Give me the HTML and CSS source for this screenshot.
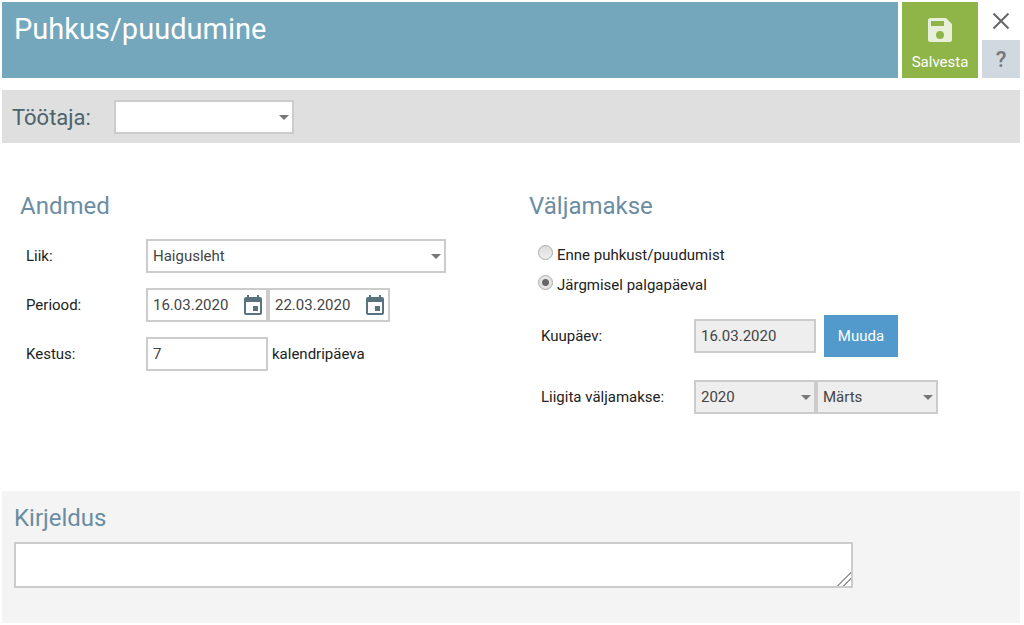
FILE: index.html
```html
<!DOCTYPE html>
<html lang="et">
<head>
<meta charset="utf-8">
<meta name="viewport" content="width=device-width, initial-scale=1">
<title>Puhkus/puudumine</title>
<link rel="stylesheet" href="styles.css">
</head>
<body>
<form class="page">
  <header class="header">
    <h1 class="title">Puhkus/puudumine</h1>
    <button type="button" class="save">
      <svg class="save-icon" viewBox="0 0 24 24" aria-hidden="true"><path fill-rule="evenodd" d="M2.500 0H18L24 6V21.500Q24 24 21.500 24H2.500Q0 24 0 21.500V2.500Q0 0 2.500 0ZM3 3V8H16V3ZM12 13A4 4 0 1 0 12 21A4 4 0 1 0 12 13Z"/></svg>
      <span>Salvesta</span>
    </button>
    <div class="tools">
      <button type="button" class="close" aria-label="Sulge">
        <svg class="close-icon" viewBox="0 0 18 18" aria-hidden="true"><path d="M1.500 1.500L16.500 16.500M16.500 1.500L1.500 16.500"/></svg>
      </button>
      <button type="button" class="help">?</button>
    </div>
  </header>

  <div class="employee">
    <label class="employee-label" for="employee">Töötaja:</label>
    <div class="select employee-select"><select id="employee" class="field"><option></option></select></div>
  </div>

  <main class="columns">
    <section class="column">
      <h2 class="heading">Andmed</h2>
      <div class="rows">
        <div class="row">
          <label for="type">Liik:</label>
          <div class="select type-select"><select id="type" class="field"><option>Haigusleht</option></select></div>
        </div>
        <div class="row">
          <label for="from">Periood:</label>
          <div class="pair">
            <div class="date">
              <input id="from" class="field" type="text" value="16.03.2020">
              <svg class="calendar" viewBox="0 0 18 20" aria-hidden="true"><path fill-rule="evenodd" d="M3 0H5V2H13V0H15V2H16Q18 2 18 4V18Q18 20 16 20H2Q0 20 0 18V4Q0 2 2 2H3ZM2 7V18H16V7ZM9 11H14V16H9Z"/></svg>
            </div>
            <div class="date">
              <input class="field" type="text" value="22.03.2020" aria-label="Perioodi lõpp">
              <svg class="calendar" viewBox="0 0 18 20" aria-hidden="true"><path fill-rule="evenodd" d="M3 0H5V2H13V0H15V2H16Q18 2 18 4V18Q18 20 16 20H2Q0 20 0 18V4Q0 2 2 2H3ZM2 7V18H16V7ZM9 11H14V16H9Z"/></svg>
            </div>
          </div>
        </div>
        <div class="row">
          <label for="days">Kestus:</label>
          <div class="pair spaced">
            <input id="days" class="field short" type="text" value="7">
            <span>kalendripäeva</span>
          </div>
        </div>
      </div>
    </section>

    <section class="column">
      <h2 class="heading">Väljamakse</h2>
      <div class="radios">
        <label class="radio"><input type="radio" name="payout"><span>Enne puhkust/puudumist</span></label>
        <label class="radio"><input type="radio" name="payout" checked><span>Järgmisel palgapäeval</span></label>
      </div>
      <div class="payout">
        <div class="row wide">
          <label for="paydate">Kuupäev:</label>
          <div class="pair button-pair">
            <input id="paydate" class="field short muted" type="text" value="16.03.2020" readonly>
            <button type="button" class="change">Muuda</button>
          </div>
        </div>
        <div class="row wide">
          <label for="year">Liigita väljamakse:</label>
          <div class="pair">
            <div class="select short"><select id="year" class="field muted"><option>2020</option></select></div>
            <div class="select short"><select class="field muted" aria-label="Kuu"><option>Märts</option></select></div>
          </div>
        </div>
      </div>
    </section>
  </main>

  <section class="description">
    <h2 class="heading"><label for="description">Kirjeldus</label></h2>
    <textarea id="description" class="field notes"></textarea>
  </section>
</form>
</body>
</html>
```
FILE: styles.css
```css
* {
  box-sizing: border-box;
}

body {
  margin: 0;
  background: #fff;
  color: #222;
  font: 15px/20px Roboto, "Liberation Sans", sans-serif;
}

button,
input,
select,
textarea {
  font: inherit;
}

button {
  padding: 0;
  border: 0;
  cursor: pointer;
}

.page {
  padding: 2px 4px 2px 2px;
}

.header {
  display: grid;
  grid-template-columns: 1fr 76px 38px;
  gap: 4px;
  min-height: 76px;
}

.title {
  margin: 0;
  padding: 9px 12px;
  background: #74a7bc;
  color: #fff;
  font-size: 29px;
  line-height: 36px;
  font-weight: 400;
}

.save {
  display: flex;
  flex-direction: column;
  align-items: center;
  justify-content: flex-end;
  gap: 10px;
  padding-bottom: 6px;
  background: #8fb448;
  color: #fff;
}

.save-icon {
  width: 24px;
  height: 24px;
  fill: #e9f0da;
}

.tools {
  display: grid;
  grid-template-rows: 1fr 1fr;
}

.close {
  background: #fff;
}

.close-icon {
  display: block;
  width: 18px;
  height: 18px;
  margin: 0 auto;
  fill: none;
  stroke: #666;
  stroke-width: 2;
}

.help {
  padding-top: 2px;
  background: #d0d8e0;
  color: #777;
  font-size: 22px;
  font-weight: 500;
}

.employee {
  display: flex;
  align-items: center;
  gap: 23px;
  min-height: 53px;
  margin-top: 12px;
  padding: 9px 10px;
  background: #dfdfdf;
}

.employee-label {
  padding-top: 2px;
  color: #4c626c;
  font-size: 22px;
  line-height: 28px;
}

.employee-select {
  width: 180px;
}

.field {
  display: block;
  width: 100%;
  height: 34px;
  padding: 0 5px;
  border: 2px solid #ccc;
  border-radius: 0;
  background: #fff;
  color: #444;
  appearance: none;
}

.muted {
  background: #eee;
}

.select,
.date {
  position: relative;
}

.select::after {
  content: "";
  position: absolute;
  top: 15px;
  right: 5px;
  border: 5px solid transparent;
  border-top-color: #777;
  border-bottom: 0;
  pointer-events: none;
}

.date,
.short {
  width: 122px;
}

.calendar {
  position: absolute;
  top: 7px;
  right: 6px;
  width: 18px;
  height: 20px;
  fill: #58727e;
}

.columns {
  display: grid;
  grid-template-columns: 1fr 1fr;
  min-height: 348px;
  padding-top: 47px;
}

.column {
  padding: 0 18px;
}

.heading {
  margin: 0;
  color: #6b8da3;
  font-size: 24px;
  line-height: 32px;
  font-weight: 400;
}

.rows {
  display: grid;
  gap: 15px;
  padding: 17px 0 0 6px;
}

.row {
  display: grid;
  grid-template-columns: 120px 1fr;
  align-items: center;
}

.row.wide {
  grid-template-columns: 153px 1fr;
}

.type-select {
  width: 300px;
}

.pair {
  display: flex;
  align-items: center;
}

.spaced {
  gap: 4px;
}

.button-pair {
  gap: 8px;
}

.radios {
  display: grid;
  gap: 10px;
  padding: 23px 0 0 9px;
}

.radio {
  display: flex;
  gap: 4px;
}

.radio input {
  width: 15px;
  height: 15px;
  margin: 0;
  border: 1px solid #aaa;
  border-radius: 50%;
  background: linear-gradient(#ddd, #eee);
  appearance: none;
}

.radio input:checked {
  background: radial-gradient(circle, #666 3px, #e4e4e4 4px);
}

.payout {
  display: grid;
  gap: 23px;
  padding: 20px 0 0 12px;
}

.change {
  width: 74px;
  height: 42px;
  background: #519acb;
  color: #fff;
}

.description {
  min-height: 132px;
  padding: 11px 12px;
  background: #f4f4f4;
}

.notes {
  width: 84.4%;
  height: 46px;
  margin-top: 8px;
  resize: both;
}

.notes::-webkit-resizer {
  background: linear-gradient(135deg, #fff 53%, #999 53% 58%, #fff 58% 73%, #999 73% 78%, #fff 78%);
}
```
